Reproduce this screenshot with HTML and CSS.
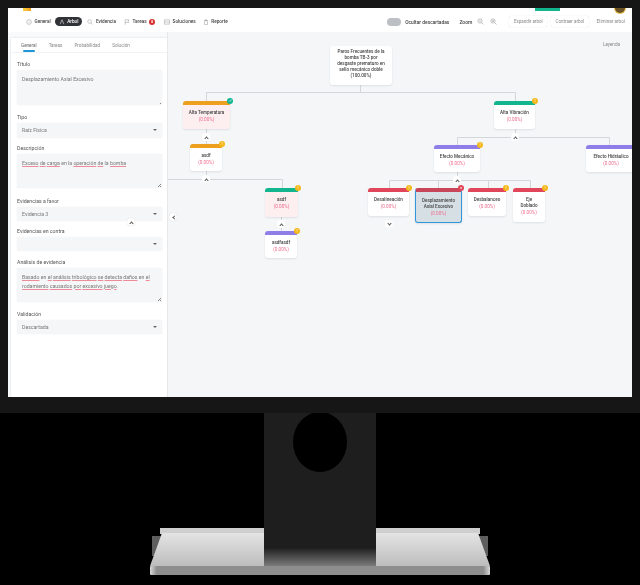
FILE: index.html
```html
<!DOCTYPE html>
<html>
<head>
<meta charset="utf-8">
<title>Arbol de fallas</title>
<link rel="stylesheet" href="styles.css">
</head>
<body>

<div class="monitor">
  <div class="screen">

    <div class="header">
      <div class="strip">
        <span class="logo"></span>
        <span class="strip-btn"></span>
        <span class="avatar"></span>
      </div>
      <div class="toolbar">
        <nav class="nav">
          <a class="nav-item nav-general"><svg viewBox="0 0 8 8"><circle cx="4" cy="4" r="3.2"/><path d="M4 3.5v2.2M4 2.2v.5"/></svg>General</a>
          <a class="nav-item nav-active"><svg viewBox="0 0 8 8"><path d="M4 1L1.5 7M4 1l2.5 6"/></svg>Arbol</a>
          <a class="nav-item nav-evidence"><svg viewBox="0 0 8 8"><circle cx="3.4" cy="3.4" r="2.4"/><path d="M5.2 5.2L7.4 7.4"/></svg>Evidencia</a>
          <a class="nav-item nav-tasks"><svg viewBox="0 0 8 8"><path d="M1.5 7.5V1h5L5.5 3l1 1.6h-5"/></svg>Tareas<span class="badge">8</span></a>
          <a class="nav-item nav-solutions"><svg viewBox="0 0 8 8"><path d="M.5 1.2h7M.5 4h7M.5 6.8h7M.5 1.2v5.6M7.5 1.2v5.6"/></svg>Soluciones</a>
          <a class="nav-item"><svg viewBox="0 0 8 8"><path d="M2 2h4v5.4H2zM3 1h2v1.4H3z"/></svg>Reporte</a>
        </nav>
        <div class="actions">
          <span class="toggle"></span>
          <span class="toggle-label">Ocultar descartadas</span>
          <span class="zoom-label">Zoom</span>
          <svg class="zoom-icon" viewBox="0 0 8 8"><circle cx="3.4" cy="3.4" r="2.4"/><path d="M5.2 5.2L7.4 7.4M2.4 3.4h2"/></svg>
          <svg class="zoom-icon zoom-last" viewBox="0 0 8 8"><circle cx="3.4" cy="3.4" r="2.4"/><path d="M5.2 5.2L7.4 7.4M2.4 3.4h2M3.4 2.4v2"/></svg>
          <a class="btn">Expandir arbol</a>
          <a class="btn">Contraer arbol</a>
          <a class="btn btn-plain">Eliminar arbol</a>
        </div>
      </div>
    </div>

    <div class="main">
      <aside class="side">
        <div class="panel">
          <div class="tabs">
            <span class="tab tab-on">General</span>
            <span class="tab">Tareas</span>
            <span class="tab">Probabilidad</span>
            <span class="tab">Solución</span>
          </div>
          <div class="form">
            <div class="field">
              <label>Título</label>
              <div class="area">Desplazamiento Axial Excesivo</div>
            </div>
            <div class="field field-tight">
              <label>Tipo</label>
              <div class="select">Raíz Física</div>
            </div>
            <div class="field field-wide">
              <label>Descripción</label>
              <div class="area area-short"><u>Exceso</u> <u>de</u> <u>carga</u> en la <u>operación</u> <u>de</u> la <u>bomba</u></div>
            </div>
            <div class="field field-tight">
              <label>Evidencias a favor</label>
              <div class="select select-short">Evidencia 3</div>
            </div>
            <div class="field field-mid">
              <label>Evidencias en contra</label>
              <div class="select select-short"></div>
            </div>
            <div class="field">
              <label>Análisis de evidencia</label>
              <div class="area area-short"><u>Basado</u> en <u>el</u> <u>análisis</u> <u>tribológico</u> <u>se</u> <u>detecta</u> <u>daños</u> en <u>el</u> <u>rodamiento</u> <u>causados</u> <u>por</u> <u>excesivo</u> <u>juego</u>.</div>
            </div>
            <div class="field">
              <label>Validación</label>
              <div class="select select-short">Descartada</div>
            </div>
          </div>
          <span class="chev chev-panel"></span>
        </div>
      </aside>

      <section class="canvas">
        <svg class="links" width="464" height="365" viewBox="0 0 464 365">
          <path d="M192.5 53v7M38.5 69v-8.5H347.5V69"/>
          <path d="M38.5 97v15M38.5 139v8M0 147.500H114.500V156M113.500 185v14"/>
          <path d="M347.500 97v8.500M289.500 113v-7.500H441.500V113M289.500 140v8M221.500 156v-7.500H362.500V156M270.500 148.500V156M320.500 148.500V156"/>
        </svg>

        <span class="legend">Leyenda</span>
        <span class="chev chev-side"></span>

        <div class="node n-root">Paros Frecuentes de la bomba TB-3 por desgaste prematuro en sello mecánico doble<br>(100.00%)</div>

        <div class="node n-temp bar-orange pink"><i class="st ok"></i>Alta Temperatura<em>(0.00%)</em></div>
        <span class="chev c-temp"></span>
        <div class="node n-asdf bar-orange"><i class="st warn"></i>asdf<em>(0.00%)</em></div>
        <span class="chev c-asdf"></span>
        <div class="node n-asdf2 bar-green pink"><i class="st warn"></i>asdf<em>(0.00%)</em></div>
        <span class="chev c-asdf2"></span>
        <div class="node n-fasdf bar-purple"><i class="st warn"></i>asdfasdf<em>(0.00%)</em></div>

        <div class="node n-vib bar-green"><i class="st warn"></i>Alta Vibración<em>(0.00%)</em></div>
        <span class="chev c-vib"></span>
        <div class="node n-mec bar-purple"><i class="st warn"></i>Efecto Mecánico<em>(0.00%)</em></div>
        <span class="chev c-mec"></span>
        <div class="node n-hid bar-purple"><i class="st warn"></i>Efecto Hidráulico<em>(0.00%)</em></div>

        <div class="node n-des bar-red"><i class="st warn"></i>Desalineación<em>(0.00%)</em></div>
        <span class="chev chev-down c-des"></span>
        <div class="node n-dis bar-red selected"><i class="st bad"></i>Desplazamiento Axial Excesivo<em>(0.00%)</em></div>
        <div class="node n-bal bar-red"><i class="st warn"></i>Desbalanceo<em>(0.00%)</em></div>
        <div class="node n-eje bar-red"><i class="st warn"></i>Eje Doblado<em>(0.00%)</em></div>
      </section>
    </div>
  </div>
</div>

<svg class="stand" width="640" height="172" viewBox="0 413 640 172">
  <defs>
    <linearGradient id="plate" x1="0" y1="0" x2="0" y2="1">
      <stop offset="0" stop-color="#e4e4e4"/>
      <stop offset="1" stop-color="#bdbdbd"/>
    </linearGradient>
    <linearGradient id="shade" x1="0" y1="0" x2="0" y2="1">
      <stop offset="0" stop-color="#161616"/>
      <stop offset="1" stop-color="#7a7a7a"/>
    </linearGradient>
    <linearGradient id="edge" x1="0" y1="0" x2="1" y2="0">
      <stop offset="0" stop-color="#d8d8d8"/>
      <stop offset=".02" stop-color="#8e8e8e"/>
      <stop offset=".98" stop-color="#8e8e8e"/>
      <stop offset="1" stop-color="#d8d8d8"/>
    </linearGradient>
  </defs>
  <rect x="152" y="536" width="336" height="20" fill="#5e5e5e"/>
  <rect x="160" y="528" width="320" height="6" fill="#cfcfcf"/>
  <path d="M162 533H478L490 566H150Z" fill="url(#plate)"/>
  <rect x="150" y="566" width="340" height="9" rx="1" fill="url(#edge)"/>
  <rect x="264" y="546" width="112" height="20" fill="url(#shade)"/>
  <rect x="264" y="413" width="112" height="134" fill="#1e1e1e"/>
  <ellipse cx="320" cy="442" rx="27" ry="30" fill="#000"/>
</svg>

</body>
</html>
```

FILE: styles.css
```css
html, body {
  margin: 0;
  height: 100%;
  background: #000;
  overflow: hidden;
}
body {
  font-family: "Roboto", "Liberation Sans", sans-serif;
  font-size: 5px;
  color: #555;
}

.monitor {
  background: #161616;
  padding: 8px 8px 16px;
}
.screen {
  height: 389px;
  display: flex;
  flex-direction: column;
  background: #f4f6f8;
  overflow: hidden;
  filter: blur(.3px);
}
.stand {
  display: block;
}

/* top bar */
.header {
  height: 24px;
  background: #fff;
}
.strip {
  height: 3px;
  display: flex;
  position: relative;
}
.logo {
  width: 8px;
  height: 3px;
  margin-left: 15px;
  background: linear-gradient(90deg, #f7d13d, #f59b23);
}
.strip-btn {
  width: 25px;
  height: 3px;
  margin-left: 504px;
  background: #13b58f;
}
.avatar {
  position: absolute;
  left: 607px;
  top: -5px;
  width: 10px;
  height: 10px;
  border-radius: 50%;
  background: #6b5226;
  box-shadow: 0 0 0 1px #e5c04a;
}
.toolbar {
  height: 21px;
  display: flex;
  align-items: center;
  justify-content: space-between;
  padding: 0 7px 0 18px;
}
.nav, .actions {
  display: flex;
  align-items: center;
}
.nav-item {
  display: flex;
  align-items: center;
  gap: 2.500px;
  font-size: 4.700px;
  font-weight: 500;
  color: #444;
  white-space: nowrap;
  margin-right: 10px;
}
.nav-item svg, .zoom-icon {
  width: 6px;
  height: 6px;
  fill: none;
  stroke: #999;
  stroke-width: .7;
  flex: none;
}
.nav-general {
  margin-right: 4px;
}
.nav-active {
  height: 9px;
  padding: 0 4px;
  border-radius: 5px;
  background: #2f3237;
  color: #fff;
  margin-right: 5px;
}
.nav-active svg {
  stroke: #fff;
}
.nav-evidence {
  margin-right: 8px;
}
.nav-tasks {
  margin-right: 9px;
}
.nav-solutions {
  margin-right: 7px;
}
.badge {
  width: 6px;
  height: 6px;
  border-radius: 50%;
  background: #d92d2d;
  color: #fff;
  font-size: 4px;
  line-height: 6px;
  text-align: center;
}
.toggle {
  width: 14px;
  height: 8px;
  border-radius: 4px;
  background: #bcc0c4;
  margin-right: 4px;
}
.toggle-label {
  font-weight: 500;
  font-size: 4.900px;
  color: #444;
  margin-right: 10px;
  white-space: nowrap;
}
.zoom-label {
  font-weight: 500;
  color: #444;
  margin-right: 5px;
}
.zoom-icon {
  width: 7px;
  height: 7px;
  margin-right: 6px;
}
.zoom-last {
  margin-right: 12px;
}
.btn {
  height: 11px;
  line-height: 11px;
  padding: 0 4.500px;
  margin-right: 4px;
  border-radius: 2px;
  box-shadow: 0 0 1px #c8ccd0;
  font-size: 4.500px;
  color: #888;
  white-space: nowrap;
}
.btn-plain {
  box-shadow: none;
  margin: 0 0 0 4px;
  padding: 0;
  font-size: 4.650px;
}

/* body of the screen */
.main {
  flex: 1;
  display: flex;
  min-height: 0;
}
.side {
  width: 160px;
  flex: none;
  padding: 6px 0 0 3px;
  box-sizing: border-box;
  background: #f9fafb;
}
.panel {
  position: relative;
  height: 100%;
  background: #fff;
  box-shadow: 0 0 2px #d8dbde;
}
.tabs {
  display: flex;
  gap: 12px;
  height: 15px;
  padding-left: 10px;
  border-bottom: 1px solid #f1f2f4;
  box-sizing: border-box;
  font-size: 4.600px;
  line-height: 15px;
  color: #888;
}
.tab {
  position: relative;
}
.tab-on {
  color: #666;
}
.tab-on::after {
  content: "";
  position: absolute;
  left: 2px;
  right: 2px;
  bottom: 0;
  height: 2px;
  border-radius: 1px;
  background: #1f96d8;
}
.form {
  padding: 7px 6px 0;
}
.field {
  margin-bottom: 8px;
}
.field-tight {
  margin-bottom: 6px;
}
.field-mid {
  margin-bottom: 7px;
}
.field-wide {
  margin-bottom: 9px;
}
.field label {
  display: block;
  height: 8px;
  line-height: 8px;
  margin-bottom: 2px;
  font-size: 5.200px;
  color: #555;
}
.area, .select {
  position: relative;
  box-sizing: border-box;
  background: #f5f6f8;
  border-radius: 2px;
  padding: 0 5px;
  font-size: 5.200px;
  color: #777;
  box-shadow: 0 0 1px #dfe2e5;
}
.area {
  height: 35px;
  padding-top: 5px;
  line-height: 8.500px;
}
.area-short {
  height: 34px;
}
.area::after {
  content: "";
  position: absolute;
  right: 1px;
  bottom: 1px;
  width: 3px;
  height: 3px;
  background: linear-gradient(135deg, transparent 50%, #888 50%, #888 60%, transparent 60%, transparent 75%, #888 75%);
}
.area u {
  text-decoration: underline #ef8a98 .6px;
  text-underline-offset: 1px;
}
.select {
  height: 15px;
  line-height: 15px;
}
.select-short {
  height: 14px;
  line-height: 14px;
}
.select::after {
  content: "";
  position: absolute;
  right: 5px;
  top: 6px;
  border: 2px solid transparent;
  border-top: 2.500px solid #666;
  border-bottom: 0;
}

/* tree */
.canvas {
  position: relative;
  flex: 1;
  overflow: hidden;
  background: #f4f6f8;
  border-left: 1px solid #e6e8ea;
  margin-left: -1px;
}
.links {
  position: absolute;
  left: 0;
  top: 0;
  fill: none;
  stroke: #d3d6da;
  stroke-width: 1;
}
.legend {
  position: absolute;
  right: 12px;
  top: 10px;
  font-size: 4.600px;
  color: #888;
}
.node {
  position: absolute;
  box-sizing: border-box;
  padding: 5px 2px 0;
  background: #fff;
  border-radius: 3px;
  box-shadow: 0 1px 2px rgba(120, 130, 140, .18);
  text-align: center;
  font-size: 4.600px;
  font-weight: 500;
  line-height: 6px;
  color: #444;
}
.node em {
  display: block;
  margin-top: 1px;
  font-style: normal;
  font-weight: 400;
  color: #ee6b8c;
}
.bar-orange, .bar-green, .bar-purple, .bar-red {
  border-top: 4px solid;
  padding-top: 5px;
}
.bar-orange { border-top-color: #eda01d; }
.bar-green { border-top-color: #13b58f; }
.bar-purple { border-top-color: #8f7ee8; }
.bar-red { border-top-color: #e0455a; }
.pink {
  background: #fdeef0;
}
.selected {
  background: #d6e0e4;
  border: 1px solid #2f96dc;
  border-top: 4px solid #c9465a;
  padding-top: 6px;
}

.n-root { left: 162px; top: 14px; width: 62px; height: 39px; padding: 3px 5px 0; }
.n-temp { left: 15px; top: 69px; width: 47px; height: 28px; }
.n-asdf { left: 22px; top: 112px; width: 32px; height: 27px; }
.n-asdf2 { left: 97px; top: 156px; width: 33px; height: 29px; }
.n-fasdf { left: 97px; top: 199px; width: 32px; height: 27px; }
.n-vib { left: 326px; top: 69px; width: 41px; height: 28px; }
.n-mec { left: 266px; top: 113px; width: 46px; height: 27px; }
.n-hid { left: 418px; top: 113px; width: 50px; height: 27px; }
.n-des { left: 200px; top: 156px; width: 41px; height: 28px; }
.n-dis { left: 247px; top: 156px; width: 47px; height: 35px; }
.n-bal { left: 300px; top: 156px; width: 38px; height: 28px; }
.n-eje { left: 345px; top: 156px; width: 32px; height: 34px; padding-left: 7px; padding-right: 7px; }

.st {
  position: absolute;
  right: -3px;
  top: -7px;
  width: 6px;
  height: 6px;
  border-radius: 50%;
  font-style: normal;
  font-size: 4px;
  line-height: 6px;
  text-align: center;
  color: #fff;
}
.st::before { content: "!"; }
.warn { background: #f5b81c; }
.ok { background: #12b594; }
.ok::before { content: "✓"; }
.bad { background: #e0455a; }
.bad::before { content: "×"; }

.chev {
  position: absolute;
  width: 8px;
  height: 8px;
  border-radius: 50%;
  background: #fff;
}
.chev::before {
  content: "";
  position: absolute;
  left: 3px;
  top: 3.500px;
  width: 2px;
  height: 2px;
  border-left: .7px solid #555;
  border-top: .7px solid #555;
  transform: rotate(45deg);
}
.chev-down::before {
  top: 2px;
  transform: rotate(225deg);
}
.chev-panel {
  right: 33px;
  top: 180px;
  box-shadow: 0 0 1px #ccc;
}
.chev-side {
  left: 1px;
  top: 181px;
  box-shadow: 0 0 1px #ccc;
}
.chev-side::before {
  left: 3.500px;
  top: 3px;
  transform: rotate(-45deg);
}
.c-temp { left: 34px; top: 101px; }
.c-asdf { left: 34px; top: 143px; }
.c-asdf2 { left: 109px; top: 188px; }
.c-vib { left: 343px; top: 101px; }
.c-mec { left: 285px; top: 144px; }
.c-des { left: 217px; top: 188px; }
```
